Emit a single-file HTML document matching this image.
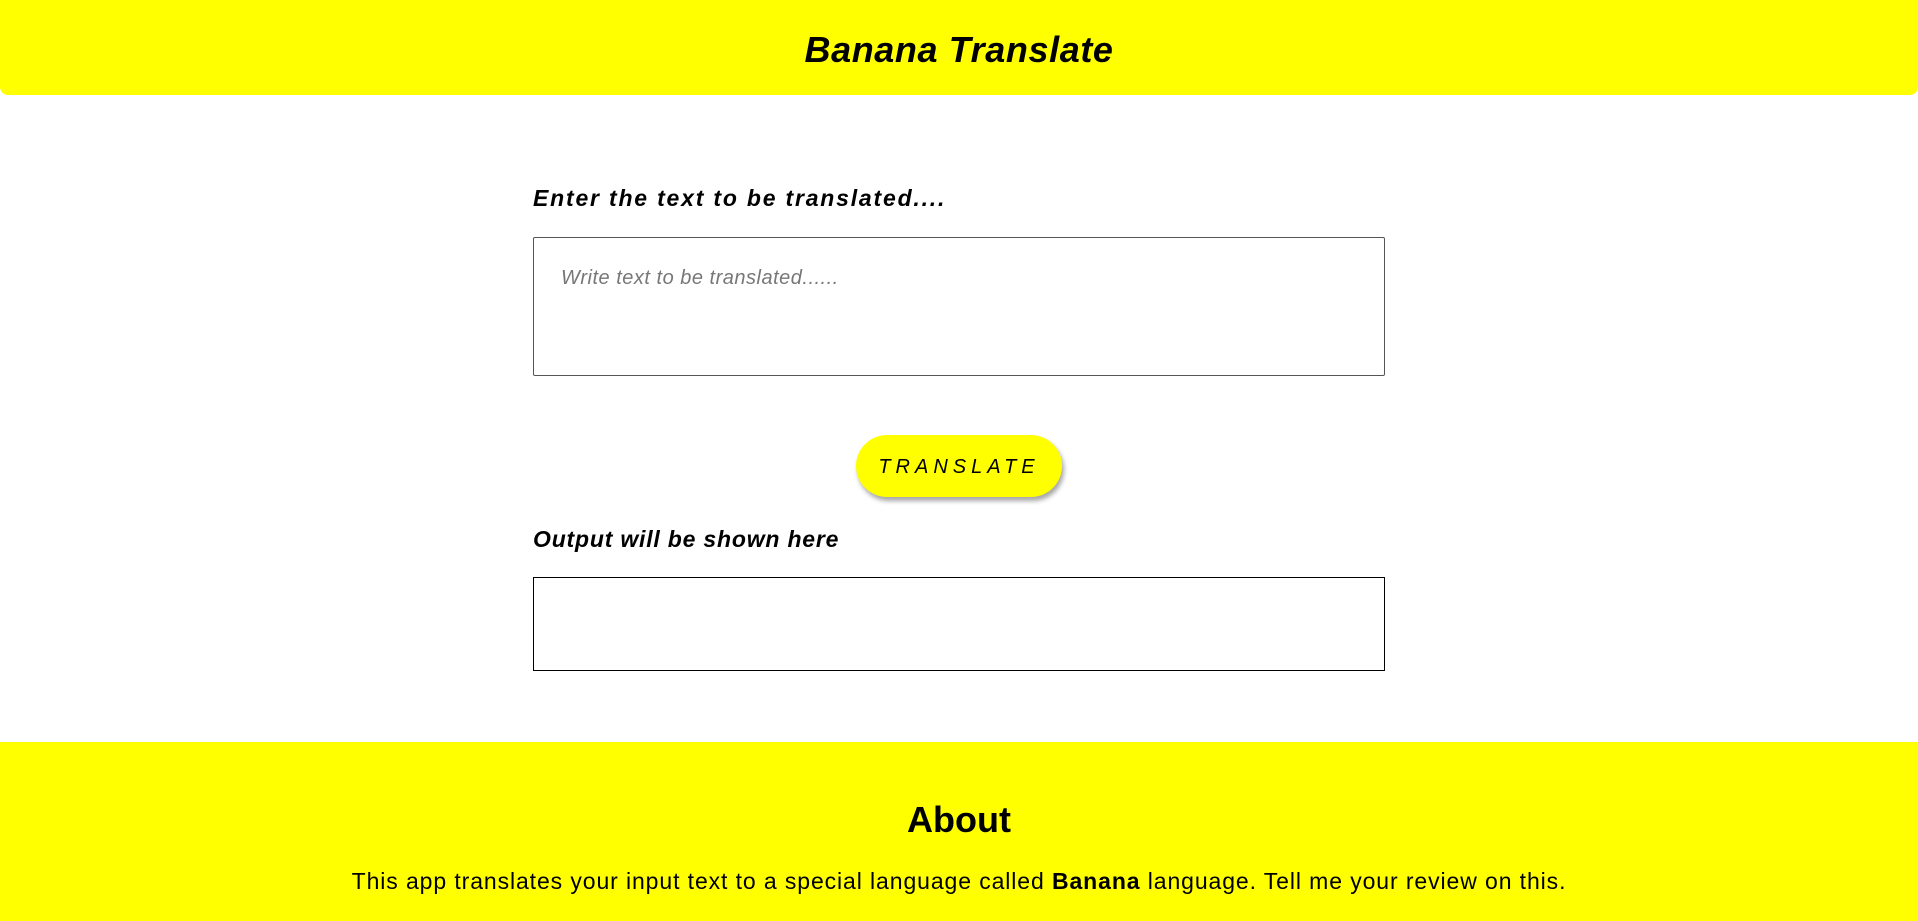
<!DOCTYPE html>
<html><head><meta charset="utf-8"><style>
*{box-sizing:border-box;margin:0;padding:0}
body{width:1918px;height:921px;overflow:hidden;background:#fff;font-family:"Comic Sans MS","Liberation Sans",sans-serif;position:relative}
header{position:absolute;left:0;top:0;width:1918px;height:95px;background:#ffff00;border-radius:0 0 8px 8px;text-align:center}
header h1{font-size:36px;font-style:italic;font-weight:bold;line-height:100px;letter-spacing:0.6px}
.lbl{position:absolute;left:533px;font-size:23px;font-weight:bold;font-style:italic}
.ta{position:absolute;left:533px;top:237px;width:852px;height:139px;border:1px solid #555;border-radius:2px}
.ta span{position:absolute;left:27px;top:29px;font-size:20px;color:#777;font-style:italic;letter-spacing:0.5px}
.btn{position:absolute;left:856px;top:435px;width:206px;height:62px;border-radius:31px;background:#ffff00;box-shadow:2px 4px 5px rgba(0,0,0,.35);text-align:center;line-height:64px;font-size:20px;letter-spacing:5px;font-style:italic}
.out{position:absolute;left:533px;top:577px;width:852px;height:94px;border:1px solid #000}
footer{position:absolute;left:0;top:742px;width:1918px;height:179px;background:#ffff00;text-align:center}
footer h2{font-size:36px;font-weight:bold;margin-top:56px;line-height:44px}
footer p{font-size:23px;margin-top:26px;letter-spacing:0.9px}
</style></head><body>
<header><h1>Banana Translate</h1></header>
<div class="lbl" style="top:185px;letter-spacing:1.8px">Enter the text to be translated....</div>
<div class="ta"><span>Write text to be translated......</span></div>
<div class="btn">TRANSLATE</div>
<div class="lbl" style="top:526px;letter-spacing:0.8px">Output will be shown here</div>
<div class="out"></div>
<footer><h2>About</h2><p>This app translates your input text to a special language called <b>Banana</b> language. Tell me your review on this.</p></footer>
</body></html>
